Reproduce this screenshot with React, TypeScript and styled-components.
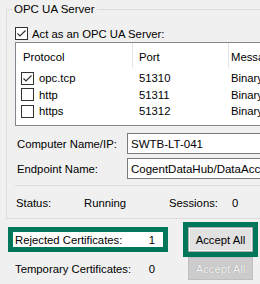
import React from "react";
import styled, { createGlobalStyle } from "styled-components";

const GlobalStyle = createGlobalStyle`
  body {
    margin: 0;
    background: #f0f0f0;
    font-family: "Liberation Sans", Arial, sans-serif;
    font-size: 11px;
    color: #000;
  }
`;

const Page = styled.div`
  width: 260px;
  height: 284px;
  overflow: hidden;
  box-sizing: border-box;
  padding-top: 9px;
  background: #f0f0f0;
`;

const GroupBox = styled.div`
  position: relative;
  margin-left: 6px;
  width: 340px;
  border: 1px solid #dcdcdc;
  padding: 16px 0 7px 8px;
`;

const Legend = styled.span`
  position: absolute;
  top: -8px;
  left: 5px;
  padding: 0 2px;
  background: #f0f0f0;
  line-height: 15px;
  font-size: 11.5px;
`;

const CheckRow = styled.label`
  display: flex;
  align-items: center;
  gap: 4px;
  height: 15px;
  font-size: 11.3px;
`;

const Box = styled.span`
  width: 13px;
  height: 13px;
  box-sizing: border-box;
  border: 1px solid #333;
  background: #fff;
  display: flex;
  align-items: center;
  justify-content: center;
  flex-shrink: 0;
`;

const Check = ({ checked }: { checked?: boolean }) => (
  <Box>
    {checked && (
      <svg width="11" height="11" viewBox="0 0 11 11">
        <polyline points="1.5,5.5 4,8 9.5,2.5" fill="none" stroke="#333" strokeWidth="1.2" />
      </svg>
    )}
  </Box>
);

const ListView = styled.div`
  margin-top: 1px;
  height: 84px;
  box-sizing: border-box;
  border: 1px solid #828790;
  background: #fff;
`;

const HeaderRow = styled.div`
  display: grid;
  grid-template-columns: 116px 96px 1fr;
  height: 25px;
  align-items: stretch;
`;

const HeaderCell = styled.div<{ $first?: boolean; $pad: number }>`
  display: flex;
  align-items: center;
  padding-left: ${(p) => p.$pad}px;
  border-left: ${(p) => (p.$first ? "none" : "1px solid #e5e5e5")};
  font-size: 11.3px;
  padding-top: 2px;
  white-space: nowrap;
`;

const DataRow = styled.div`
  display: grid;
  grid-template-columns: 116px 96px 1fr;
  height: 16.5px;
  align-items: center;
  font-size: 11.3px;
`;

const ProtoCell = styled.div`
  display: flex;
  align-items: center;
  gap: 5px;
  padding-left: 5px;
`;

const Cell = styled.div<{ $pad: number }>`
  padding-left: ${(p) => p.$pad}px;
  white-space: nowrap;
`;

const Rows = styled.div`
  padding-top: 2px;
`;

const FieldRow = styled.div`
  display: flex;
  align-items: center;
  margin-top: 7px;
  & + & {
    margin-top: 4px;
  }
`;

const FieldLabel = styled.span`
  width: 110px;
  padding-left: 2px;
  font-size: 11.3px;
`;

const TextBox = styled.div`
  flex: 1;
  height: 21px;
  box-sizing: border-box;
  border: 1px solid #7a7a7a;
  background: #fff;
  padding-left: 3px;
  display: flex;
  align-items: center;
  white-space: nowrap;
  font-size: 11.5px;
`;

const Separator = styled.div`
  margin-top: 6px;
  border-top: 1px solid #dcdcdc;
`;

const StatusRow = styled.div`
  display: grid;
  grid-template-columns: 68px 85px 63px 1fr;
  margin-top: 10px;
  line-height: 15px;
  padding-left: 1px;
  font-size: 11.3px;
`;

const CertRow = styled.div`
  display: flex;
  align-items: center;
  gap: 15px;
  padding-left: 8px;
  margin-top: 3px;
  & + & {
    margin-top: 0;
  }
`;

const Frame = styled.div<{ $on?: boolean; $w: number; $h: number; $white?: boolean }>`
  width: ${(p) => p.$w}px;
  height: ${(p) => p.$h}px;
  box-sizing: border-box;
  border: 5px solid ${(p) => (p.$on ? "#00775a" : "transparent")};
  background: ${(p) => (p.$white ? "#fff" : "transparent")};
  display: flex;
  align-items: center;
`;

const CertLabel = styled.span`
  flex: 1;
  padding-left: 2px;
  font-size: 11.3px;
`;

const CertValue = styled.span`
  padding-right: 8px;
  font-size: 11.3px;
`;

const Button = styled.button<{ $disabled?: boolean }>`
  width: 65px;
  height: ${(p) => (p.$disabled ? "23px" : "25px")};
  box-sizing: border-box;
  margin: 0;
  padding: 0;
  font-family: inherit;
  font-size: 11.3px;
  border: 1px solid ${(p) => (p.$disabled ? "#bfbfbf" : "#adadad")};
  background: ${(p) => (p.$disabled ? "#cccccc" : "#e1e1e1")};
  box-shadow: ${(p) => (p.$disabled ? "none" : "inset 0 0 0 1px #f4f4f4")};
  color: ${(p) => (p.$disabled ? "#f6f6f6" : "#000")};
  text-shadow: ${(p) => (p.$disabled ? "0 0 1px #8c8c8c" : "none")};
`;

const protocols = [
  { name: "opc.tcp", port: "51310", on: true },
  { name: "http", port: "51311", on: false },
  { name: "https", port: "51312", on: false },
];

export default function App() {
  return (
    <Page>
      <GlobalStyle />
      <GroupBox>
        <Legend>OPC UA Server</Legend>
        <CheckRow>
          <Check checked />
          Act as an OPC UA Server:
        </CheckRow>
        <ListView>
          <HeaderRow>
            <HeaderCell $first $pad={7}>Protocol</HeaderCell>
            <HeaderCell $pad={6}>Port</HeaderCell>
            <HeaderCell $pad={2}>Message Security Mode</HeaderCell>
          </HeaderRow>
          <Rows>
            {protocols.map((p) => (
              <DataRow key={p.name}>
                <ProtoCell>
                  <Check checked={p.on} />
                  {p.name}
                </ProtoCell>
                <Cell $pad={7}>{p.port}</Cell>
                <Cell $pad={3}>Binary</Cell>
              </DataRow>
            ))}
          </Rows>
        </ListView>
        <FieldRow>
          <FieldLabel>Computer Name/IP:</FieldLabel>
          <TextBox>SWTB-LT-041</TextBox>
        </FieldRow>
        <FieldRow>
          <FieldLabel>Endpoint Name:</FieldLabel>
          <TextBox>CogentDataHub/DataAccess</TextBox>
        </FieldRow>
        <Separator />
        <StatusRow>
          <span>Status:</span>
          <span>Running</span>
          <span>Sessions:</span>
          <span>0</span>
        </StatusRow>
      </GroupBox>
      <CertRow>
        <Frame $on $white $w={160} $h={25}>
          <CertLabel>Rejected Certificates:</CertLabel>
          <CertValue>1</CertValue>
        </Frame>
        <Frame $on $w={75} $h={35}>
          <Button>Accept All</Button>
        </Frame>
      </CertRow>
      <CertRow>
        <Frame $w={160} $h={23}>
          <CertLabel>Temporary Certificates:</CertLabel>
          <CertValue>0</CertValue>
        </Frame>
        <Frame $w={75} $h={23}>
          <Button $disabled disabled>
            Accept All
          </Button>
        </Frame>
      </CertRow>
    </Page>
  );
}
